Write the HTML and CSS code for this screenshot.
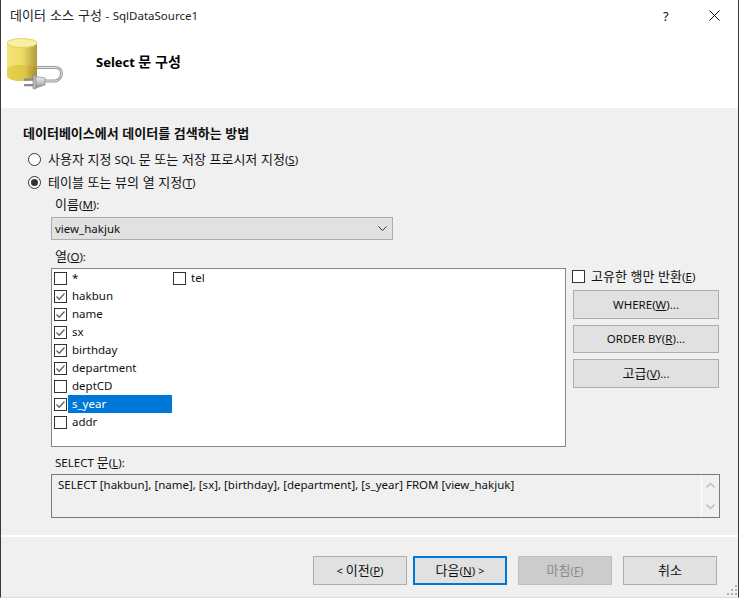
FILE: index.html
```html
<!DOCTYPE html>
<html lang="ko">
<head>
<meta charset="utf-8">
<title>데이터 소스 구성 - SqlDataSource1</title>
<link rel="stylesheet" href="styles.css">
</head>
<body>
<svg class="sprite" width="0" height="0"><defs>
<symbol id="tick" viewBox="0 0 13 13"><path d="M2.500 6.500 5.200 9.200 10.500 3.500" fill="none" stroke="#5f5f5f" stroke-width="1.300"/></symbol>
</defs></svg>
<div class="window">
  <div class="top">
    <div class="titlebar">
      <span class="title"><span class="ko">데이터 소스 구성</span> - SqlDataSource1</span>
      <span class="help">?</span>
      <svg class="close" width="11" height="11" viewBox="0 0 11 11"><path d="M.5.5 10.500 10.500M10.500.5.5 10.500" stroke="#111" stroke-width="1" fill="none"/></svg>
    </div>
    <div class="header">
      <svg class="dbicon" width="56" height="52" viewBox="0 0 56 52">
        <defs>
          <linearGradient id="gold" x1="0" x2="1" y1="0" y2="0"><stop offset="0" stop-color="#f3e578"/><stop offset=".5" stop-color="#f0dd68"/><stop offset="1" stop-color="#b39a3e"/></linearGradient>
          <linearGradient id="goldlow" x1="0" x2="1" y1="0" y2="0"><stop offset="0" stop-color="#e8d24e"/><stop offset=".6" stop-color="#dcc648"/><stop offset="1" stop-color="#a68e2e"/></linearGradient>
          <linearGradient id="metal" x1="0" x2="0" y1="0" y2="1"><stop offset="0" stop-color="#f0f0f0"/><stop offset=".5" stop-color="#c8c8c8"/><stop offset="1" stop-color="#8c8c8c"/></linearGradient>
        </defs>
        <path d="M0 5v33c0 3 7 5 15 5s15-2 15-5V5z" fill="url(#gold)"/>
        <path d="M0 31v7c0 3 7 5 15 5s15-2 15-5v-7c0-3-7-4-15-4S0 28 0 31z" fill="url(#goldlow)"/>
        <ellipse cx="15" cy="5" rx="15" ry="4.500" fill="#f8f0a0" stroke="#dccb5c" stroke-width=".8"/>
        <path d="M30 29.500h18c4 0 6.500 2.500 6.500 6s-3 7.500-7 7.500H38" fill="none" stroke="#9a9a9a" stroke-width="3"/>
        <path d="M30 29.500h18c4 0 6.500 2.500 6.500 6s-3 7.500-7 7.500H38" fill="none" stroke="#e6e6e6" stroke-width="1"/>
        <path d="M17 40.500h9v2.200h-9zM17 46h9v2.200h-9z" fill="#8a8a8a"/>
        <path d="M28.500 38.500 38 40v7l-9.500 3z" fill="url(#metal)" stroke="#8a8a8a" stroke-width=".7"/>
        <rect x="26" y="37" width="3" height="14" rx="1" fill="#bdbdbd" stroke="#777" stroke-width=".6"/>
      </svg>
      <span class="pagetitle">Select <span class="ko-lg">문 구성</span></span>
    </div>
  </div>

  <div class="content">
    <div class="heading"><span class="ko">데이터베이스에서 데이터를 검색하는 방법</span></div>
    <label class="radio-row first"><span class="radio"></span><span class="radio-text"><span class="ko">사용자 지정</span> SQL <span class="ko">문 또는 저장 프로시저 지정</span>(<u>S</u>)</span></label>
    <label class="radio-row"><span class="radio on"></span><span class="radio-text"><span class="ko">테이블 또는 뷰의 열 지정</span>(<u>T</u>)</span></label>

    <div class="indent">
      <div class="caption name-cap"><span class="ko">이름</span>(<u>M</u>):</div>
      <div class="select">
        <span>view_hakjuk</span>
        <svg width="9" height="5" viewBox="0 0 9 5"><path d="M.5.5 4.500 4.500 8.500.5" fill="none" stroke="#333" stroke-width="1"/></svg>
      </div>
      <div class="caption col-cap"><span class="ko">열</span>(<u>O</u>):</div>
      <div class="columns">
        <div class="list">
          <div class="item"><span class="check"></span><span class="label">*</span></div>
          <div class="item"><span class="check"><svg width="13" height="13"><use href="#tick"/></svg></span><span class="label">hakbun</span></div>
          <div class="item"><span class="check"><svg width="13" height="13"><use href="#tick"/></svg></span><span class="label">name</span></div>
          <div class="item"><span class="check"><svg width="13" height="13"><use href="#tick"/></svg></span><span class="label">sx</span></div>
          <div class="item"><span class="check"><svg width="13" height="13"><use href="#tick"/></svg></span><span class="label">birthday</span></div>
          <div class="item"><span class="check"><svg width="13" height="13"><use href="#tick"/></svg></span><span class="label">department</span></div>
          <div class="item"><span class="check"></span><span class="label">deptCD</span></div>
          <div class="item"><span class="check"><svg width="13" height="13"><use href="#tick"/></svg></span><span class="label selected">s_year</span></div>
          <div class="item"><span class="check"></span><span class="label">addr</span></div>
          <div class="item"><span class="check"></span><span class="label">tel</span></div>
        </div>
        <div class="side">
          <label class="unique"><span class="check"></span><span><span class="ko">고유한 행만 반환</span>(<u>E</u>)</span></label>
          <button class="btn side-btn where">WHERE(<u>W</u>)...</button>
          <button class="btn side-btn order">ORDER BY(<u>R</u>)...</button>
          <button class="btn side-btn adv"><span class="ko">고급</span>(<u>V</u>)...</button>
        </div>
      </div>
      <div class="caption sql-cap">SELECT <span class="ko">문</span>(<u>L</u>):</div>
      <div class="sqlbox">
        <div class="sqltext">SELECT [hakbun], [name], [sx], [birthday], [department], [s_year] FROM [view_hakjuk]</div>
        <div class="scrollbar">
          <svg width="9" height="6" viewBox="0 0 9 6"><path d="M.5 5.500 4.500 1.500 8.500 5.500" fill="none" stroke="#c4c4c4" stroke-width="1.600"/></svg>
          <svg width="9" height="6" viewBox="0 0 9 6"><path d="M.5.5 4.500 4.500 8.500.5" fill="none" stroke="#c4c4c4" stroke-width="1.600"/></svg>
        </div>
      </div>
    </div>
  </div>

  <div class="separator"></div>

  <div class="footer">
    <button class="btn foot"><span class="arrow">&lt;</span> <span class="ko">이전</span>(<u>P</u>)</button>
    <button class="btn foot default"><span class="ko">다음</span>(<u>N</u>) <span class="arrow">&gt;</span></button>
    <button class="btn foot disabled" disabled><span class="ko">마침</span>(<u>F</u>)</button>
    <button class="btn foot"><span class="ko">취소</span></button>
  </div>

  <svg class="grip" width="12" height="12" viewBox="0 0 12 12" fill="#b4b4b4"><path d="M9 0h2v2H9zM5 4h2v2H5zM9 4h2v2H9zM1 8h2v2H1zM5 8h2v2H5zM9 8h2v2H9z"/></svg>
</div>
</body>
</html>
```
FILE: styles.css
```css
* { box-sizing: border-box; }
html, body { margin: 0; padding: 0; }
body {
  width: 739px;
  height: 598px;
  overflow: hidden;
  background: #f0f0f0;
  font-family: "Noto Sans", "Noto Sans CJK KR", sans-serif;
  font-size: 11.5px;
  line-height: 18px;
  color: #111;
}
.ko { font-family: "Noto Sans CJK KR", sans-serif; font-size: 13px; line-height: 1; }
.ko-lg { font-family: "Noto Sans CJK KR", sans-serif; font-size: 14px; line-height: 1; }
.sprite { position: absolute; }
.window {
  position: relative;
  width: 739px;
  height: 598px;
  border-left: 1px solid #3a3a3a;
  border-right: 1px solid #3a3a3a;
  border-bottom: 1px solid #dcdcdc;
  background: #f0f0f0;
}
.top { background: #fff; height: 108px; }
.titlebar { display: flex; align-items: center; height: 31px; padding-left: 9px; }
.title { flex: 1; color: #222; word-spacing: .5px; }
.help { width: 13px; font-size: 13px; margin-right: 33px; }
.close { margin-right: 18px; }
.header { display: flex; align-items: flex-start; }
.dbicon { margin: 7px 0 0 6px; }
.pagetitle { margin: 20px 0 0 33px; line-height: 22px; font-size: 13px; font-weight: 700; color: #000; }
.content { padding: 16px 0 0 22px; }
.heading { height: 18px; padding-top: 1px; font-weight: 700; color: #111; }
.radio-row { display: flex; align-items: center; height: 18px; margin-top: 5px; padding-left: 5px; }
.radio-row.first { margin-top: 8px; }
.radio-text { padding-top: 1px; }
.radio {
  position: relative;
  width: 13px;
  height: 13px;
  margin-right: 7px;
  border: 1px solid #333;
  border-radius: 50%;
  background: #fff;
}
.radio.on::after {
  content: "";
  position: absolute;
  left: 2px;
  top: 2px;
  width: 7px;
  height: 7px;
  border-radius: 50%;
  background: #333;
}
.indent { padding-left: 28px; }
.caption { height: 18px; padding: 1px 0 0 4px; }
.name-cap { margin-top: 4px; }
.col-cap { margin-top: 7px; }
.sql-cap { margin-top: 6px; }
.select {
  display: flex;
  align-items: center;
  justify-content: space-between;
  width: 342px;
  height: 23px;
  margin-top: 4px;
  padding: 0 5px 0 3px;
  background: #e1e1e1;
  border: 1px solid #adadad;
}
.columns { display: flex; margin-top: 3px; }
.list {
  display: grid;
  grid-auto-flow: column;
  grid-template-rows: repeat(9, 18px);
  grid-template-columns: 119px 1fr;
  align-content: start;
  width: 515px;
  height: 179px;
  padding: 0 0 0 2px;
  background: #fff;
  border: 1px solid #828790;
}
.item { display: flex; align-items: center; height: 18px; }
.check {
  flex: none;
  display: block;
  width: 13px;
  height: 13px;
  background: #fff;
  border: 1px solid #333;
}
.check svg { display: block; margin: -1px; }
.label { width: 104px; height: 18px; margin-left: 1px; padding-left: 4px; line-height: 18px; }
.selected { background: #0078d7; color: #fff; }
.side { margin-left: 6px; width: 147px; }
.unique { display: flex; align-items: center; height: 18px; }
.unique .check { margin: -2px 6px 0 0; }
.btn {
  display: block;
  padding: 0;
  font: inherit;
  color: #111;
  background: #e1e1e1;
  border: 1px solid #adadad;
  border-radius: 0;
}
.side-btn { width: 146px; margin-left: 1px; }
.where { height: 29px; margin-top: 4px; }
.order { height: 28px; margin-top: 6px; }
.adv { height: 29px; margin-top: 6px; }
.sqlbox {
  display: flex;
  width: 669px;
  height: 44px;
  margin-top: 3px;
  border: 1px solid #7a7a7a;
}
.sqltext { flex: 1; padding: 1px 0 0 6px; line-height: 18px; }
.scrollbar {
  display: flex;
  flex-direction: column;
  justify-content: space-between;
  align-items: center;
  width: 18px;
  padding: 7px 0;
  border-left: 1px solid #fff;
}
.separator { height: 2px; margin-top: 17px; background: #fff; }
.footer { display: flex; justify-content: flex-end; margin-top: 19px; padding-right: 21px; }
.foot { width: 94px; height: 29px; margin-left: 11px; }
.foot.default { margin-left: 6px; border: 2px solid #0078d7; }
.foot.disabled { background: #ccc; border-color: #bfbfbf; color: #8a8a8a; }
.arrow { font-size: 11px; }
.grip { position: absolute; right: 0; bottom: 0; }
```
